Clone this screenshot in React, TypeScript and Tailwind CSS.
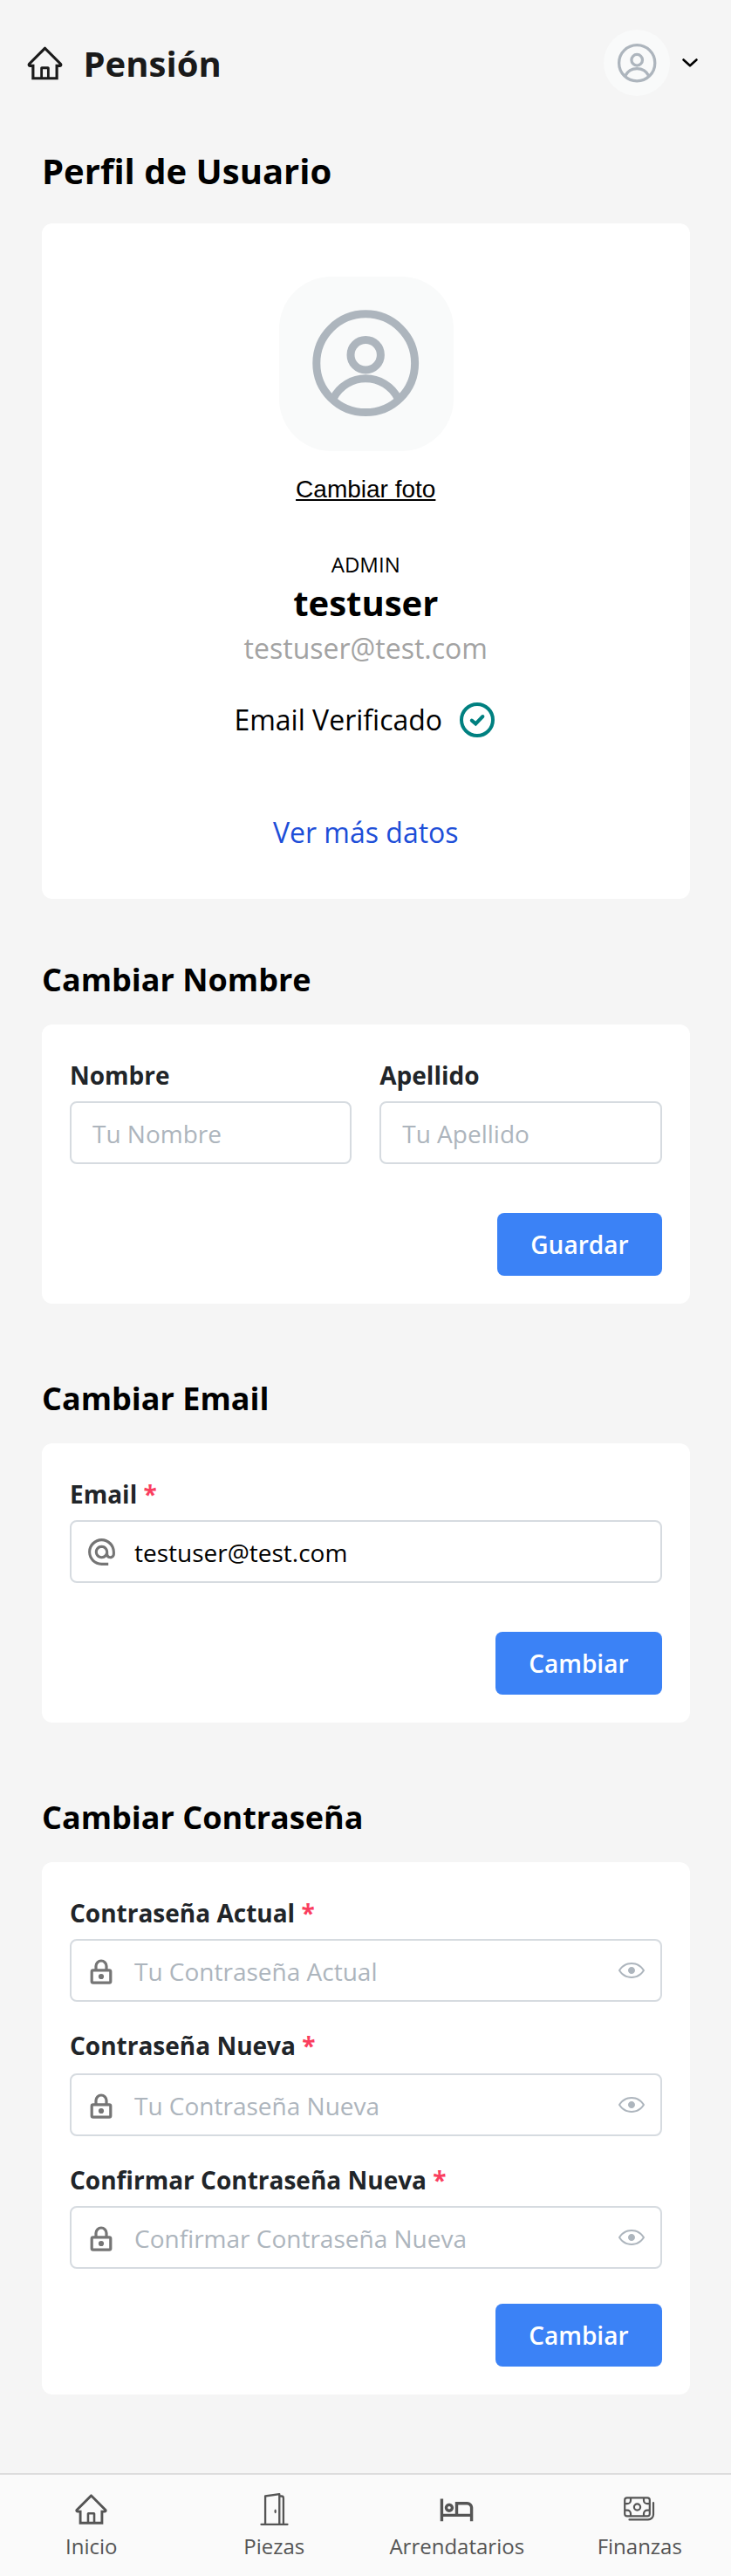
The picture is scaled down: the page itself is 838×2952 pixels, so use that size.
import React, { type ReactNode } from "react";
import { AiOutlineHome } from "react-icons/ai";
import { BsDoorOpen } from "react-icons/bs";
import { MdAlternateEmail, MdOutlineHotel } from "react-icons/md";

function AvatarIcon({ className }: { className: string }) {
  return (
    <svg viewBox="0 0 200 200" fill="none" stroke="#adb5bd" strokeWidth="9" className={className}>
      <circle cx="99.2" cy="99.2" r="56.4" />
      <circle cx="99.2" cy="89.7" r="17.2" />
      <path d="M62.5 139A41.4 41.4 0 0 1 135.9 139" />
    </svg>
  );
}

function LockIcon() {
  return (
    <svg viewBox="0 0 28 32" className="mt-[3px] h-8 w-7" fill="none" stroke="#757575" strokeWidth="3.2">
      <rect x="3.2" y="13.8" width="21.6" height="14.4" rx="1.6" />
      <path d="M8 13.5V9a6 6 0 0 1 12 0v4.5" />
      <circle cx="14" cy="21" r="3.1" fill="#757575" stroke="none" />
    </svg>
  );
}

function EyeIcon() {
  return (
    <svg viewBox="0 0 15 15" className="h-[30px] w-[30px]" fill="#adb5bd">
      <path
        fillRule="evenodd"
        clipRule="evenodd"
        d="M7.5 11C4.80285 11 2.52952 9.62184 1.09622 7.50001C2.52952 5.37816 4.80285 4 7.5 4C10.1971 4 12.4705 5.37816 13.9038 7.50001C12.4705 9.62183 10.1971 11 7.5 11ZM7.5 3C4.30786 3 1.65639 4.70638 0.0760002 7.23501C-0.0253338 7.39715 -0.0253334 7.60288 0.0760014 7.76501C1.65639 10.2936 4.30786 12 7.5 12C10.6921 12 13.3436 10.2936 14.924 7.76501C15.0253 7.60288 15.0253 7.39715 14.924 7.23501C13.3436 4.70638 10.6921 3 7.5 3ZM7.5 9.5C8.60457 9.5 9.5 8.60457 9.5 7.5C9.5 6.39543 8.60457 5.5 7.5 5.5C6.39543 5.5 5.5 6.39543 5.5 7.5C5.5 8.60457 6.39543 9.5 7.5 9.5Z"
      />
    </svg>
  );
}

function CashIcon() {
  return (
    <svg viewBox="0 0 36 28" className="h-7 w-9" fill="none" stroke="#555" strokeWidth="2.2">
      <rect x="1.2" y="1.4" width="28.6" height="21" rx="2.6" />
      <circle cx="15.5" cy="12" r="3.6" />
      <path d="M8 1.4V4.2A4 4 0 0 1 4 8.2H1.2M23 1.4V4.2A4 4 0 0 0 27 8.2H29.8M8 22.4V19.6A4 4 0 0 0 4 15.6H1.2M23 22.4V19.6A4 4 0 0 1 27 15.6H29.8" />
      <path d="M6.5 26.4H28a6 6 0 0 0 6-6V7" strokeLinecap="round" />
    </svg>
  );
}

function Label({ children, required }: { children: ReactNode; required?: boolean }) {
  return (
    <label className="block text-[28px] leading-[44px] font-bold text-[#212529]">
      {children}
      {required && <span className="text-[#fa3e5f]"> *</span>}
    </label>
  );
}

function Box({ children }: { children: ReactNode }) {
  return (
    <div className="flex h-[72px] items-center rounded-lg border-2 border-[#d6dbe0] bg-white text-[28px]">
      {children}
    </div>
  );
}

function SubmitButton({ children }: { children: ReactNode }) {
  return (
    <button className="h-[72px] rounded-lg bg-[#3b82f6] px-[38px] text-[28px] font-semibold text-white">
      {children}
    </button>
  );
}

function Section({ title, children }: { title: string; children: ReactNode }) {
  return (
    <section>
      <h2 className="mb-[25px] text-[36px] leading-[52px] font-bold">{title}</h2>
      <div className="rounded-xl bg-white px-8 pt-9 pb-8">{children}</div>
    </section>
  );
}

function PasswordField({ label, placeholder, className }: { label: string; placeholder: string; className: string }) {
  return (
    <div className={className}>
      <Label required>{label}</Label>
      <Box>
        <span className="mr-1 flex w-[68px] justify-center">
          <LockIcon />
        </span>
        <span className="flex-1 pt-px text-[#adb5bd]">{placeholder}</span>
        <span className="mr-[18px]">
          <EyeIcon />
        </span>
      </Box>
    </div>
  );
}

function NavItem({ icon, children }: { icon: ReactNode; children: ReactNode }) {
  return (
    <a className="flex flex-1 flex-col items-center pt-[19px] text-[#555]">
      <span className="flex h-10 items-center">{icon}</span>
      <span className="mt-[5px] text-[24px] leading-[36px]">{children}</span>
    </a>
  );
}

export default function App() {
  return (
    <div className="flex h-[2952px] w-[838px] flex-col bg-[#f5f5f5] font-['Open_Sans',sans-serif] text-black">
      <header className="flex h-36 items-center pr-[34px] pl-[28.5px] text-[#1a1a1a]">
        <AiOutlineHome className="h-[45px] w-[45px]" />
        <h1 className="ml-[22px] pt-px text-[40px] leading-[56px] font-bold">Pensión</h1>
        <div className="ml-auto flex h-[76px] w-[76px] items-center justify-center rounded-full bg-[#f9fafa]">
          <AvatarIcon className="h-[73px] w-[73px]" />
        </div>
        <svg viewBox="0 0 24 24" className="mr-px ml-[11px] h-6 w-6" fill="none" stroke="#000" strokeWidth="2.6" strokeLinecap="round" strokeLinejoin="round">
          <path d="M4.5 8.5L12 15.3L19.5 8.5" />
        </svg>
      </header>

      <main className="flex-1 pr-[47.5px] pl-12">
        <h1 className="mt-6 mb-8 text-[40px] leading-[56px] font-bold">Perfil de Usuario</h1>
        <div className="mb-[67px] flex h-[774px] flex-col items-center rounded-xl bg-white pt-[61px]">
          <div className="ml-px h-[200px] w-[200px] rounded-[60px] bg-[#f9fafa]">
            <AvatarIcon className="h-[200px] w-[200px]" />
          </div>
          <button className="mt-6 font-['Liberation_Sans',sans-serif] text-[28px] leading-[40px] underline">
            Cambiar foto
          </button>
          <p className="mt-[49px] text-[24px] leading-[34px]">ADMIN</p>
          <p className="-mt-px mb-px text-[40px] leading-[56px] font-bold">testuser</p>
          <p className="text-[32px] leading-[46px] text-[#a3a3a3]">testuser@test.com</p>
          <div className="mt-[35px] mr-px flex h-12 items-center gap-[18px] text-[32px]">
            <span>Email Verificado</span>
            <svg viewBox="0 0 44 44" className="h-11 w-11" fill="none" stroke="#008080" strokeWidth="4">
              <circle cx="22" cy="22" r="18" />
              <path d="M15.8 22.6L20.3 26.4L28.4 18" strokeLinecap="round" />
            </svg>
          </div>
          <a className="mt-[81px] text-[32px] leading-[48px] text-[#1d4ed8]">Ver más datos</a>
        </div>

        <div className="flex flex-col gap-[83px]">
          <Section title="Cambiar Nombre">
            <div className="grid grid-cols-2 gap-8">
              <div className="flex flex-col gap-2">
                <Label>Nombre</Label>
                <Box>
                  <span className="pt-px pl-6 text-[#adb5bd]">Tu Nombre</span>
                </Box>
              </div>
              <div className="flex flex-col gap-2">
                <Label>Apellido</Label>
                <Box>
                  <span className="pt-px pl-6 text-[#adb5bd]">Tu Apellido</span>
                </Box>
              </div>
            </div>
            <div className="mt-14 flex justify-end">
              <SubmitButton>Guardar</SubmitButton>
            </div>
          </Section>

          <Section title="Cambiar Email">
            <div className="flex flex-col gap-2">
              <Label required>Email</Label>
              <Box>
                <span className="mr-1 flex w-[68px] justify-center">
                  <MdAlternateEmail className="h-[37px] w-[37px] text-[#757575]" />
                </span>
                <span className="pt-px">testuser@test.com</span>
              </Box>
            </div>
            <div className="mt-14 flex justify-end">
              <SubmitButton>Cambiar</SubmitButton>
            </div>
          </Section>

          <Section title="Cambiar Contraseña">
            <PasswordField className="flex flex-col gap-2" label="Contraseña Actual" placeholder="Tu Contraseña Actual" />
            <PasswordField className="mt-7 flex flex-col gap-[10px]" label="Contraseña Nueva" placeholder="Tu Contraseña Nueva" />
            <PasswordField className="mt-7 flex flex-col gap-2" label="Confirmar Contraseña Nueva" placeholder="Confirmar Contraseña Nueva" />
            <div className="mt-10 flex justify-end">
              <SubmitButton>Cambiar</SubmitButton>
            </div>
          </Section>
        </div>
      </main>

      <nav className="flex h-[118px] border-t-2 border-[#dcdcdc] bg-[#fafafa]">
        <NavItem icon={<AiOutlineHome className="h-[41px] w-[41px]" />}>Inicio</NavItem>
        <NavItem icon={<BsDoorOpen className="h-[37px] w-[37px]" />}>Piezas</NavItem>
        <NavItem icon={<MdOutlineHotel className="h-[41px] w-[41px]" />}>Arrendatarios</NavItem>
        <NavItem icon={<CashIcon />}>Finanzas</NavItem>
      </nav>
    </div>
  );
}
